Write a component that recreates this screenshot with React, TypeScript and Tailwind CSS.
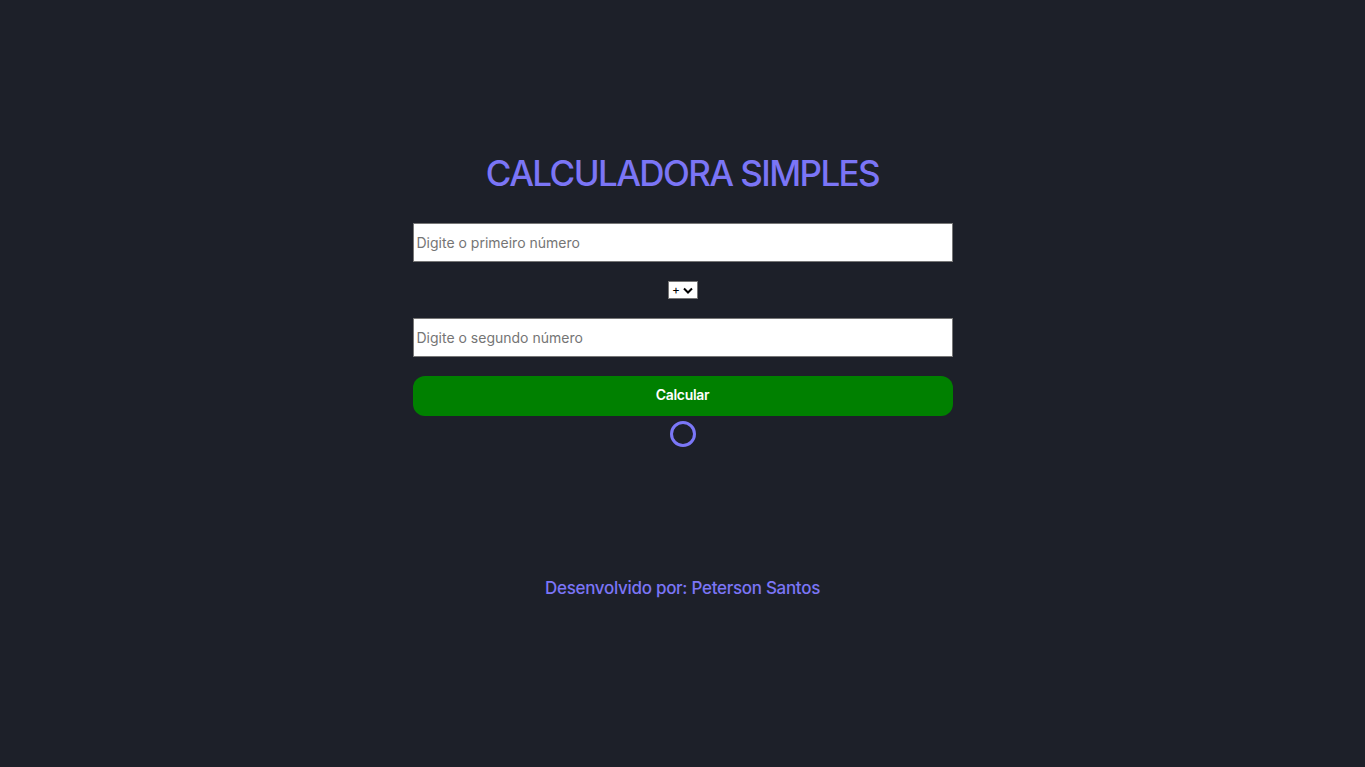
import React from "react";

export default function App() {
  return (
    <div
      className="min-h-screen w-full bg-[#1d2029] flex flex-col items-center pt-[153px]"
      style={{ fontFamily: "Inter, 'Open Sans', sans-serif" }}
    >
      <h1 className="text-[35px] leading-[40px] font-medium text-[#7b75f6] tracking-[-1.6px]">
        CALCULADORA SIMPLES
      </h1>
      <div className="w-[540px] mt-[30px] flex flex-col items-center">
        <input
          type="text"
          placeholder="Digite o primeiro número"
          className="w-full h-[39px] bg-white border border-[#767676] px-[3px] text-[14px] text-black placeholder:text-[#757575] outline-none"
        />
        <div className="mt-[19px] h-[18px] w-[30px] bg-white border border-[#767676] flex items-center justify-center gap-[3px] text-[12px] leading-none text-black">
          <span>+</span>
          <svg width="10" height="7" viewBox="0 0 10 7">
            <path d="M1 1.5 L5 5.5 L9 1.5" fill="none" stroke="#000" strokeWidth="2" />
          </svg>
        </div>
        <input
          type="text"
          placeholder="Digite o segundo número"
          className="mt-[19px] w-full h-[39px] bg-white border border-[#767676] px-[3px] text-[14px] text-black placeholder:text-[#757575] outline-none"
        />
        <button className="mt-[19px] w-full h-[40px] pb-[3px] rounded-[12px] bg-[#008000] text-white text-[14px] font-semibold tracking-[-0.3px]">
          Calcular
        </button>
        <div className="mt-[5px] w-[26px] h-[26px] rounded-full border-[3px] border-[#7b77f7]" />
      </div>
      <p className="mt-[129px] text-[17px] leading-[24px] font-medium text-[#7b75f6] tracking-[-0.3px]">
        Desenvolvido por: Peterson Santos
      </p>
    </div>
  );
}
